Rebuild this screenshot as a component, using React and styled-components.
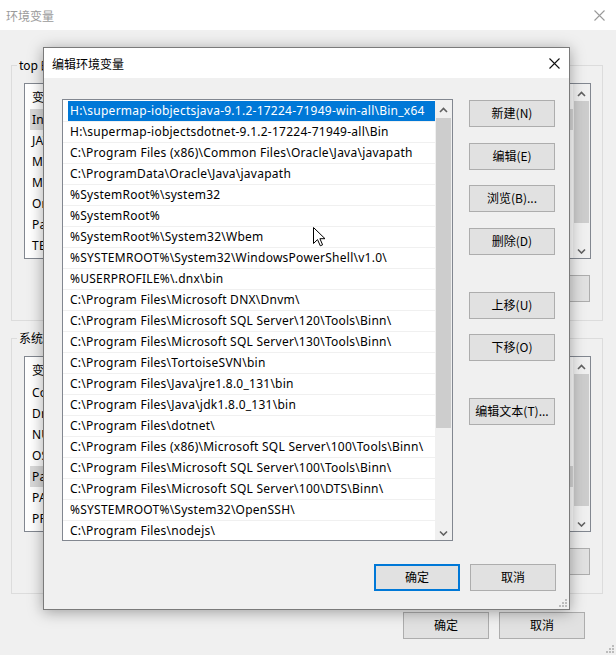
import React from "react";
import styled, { createGlobalStyle } from "styled-components";

const GlobalStyle = createGlobalStyle`
  html, body { margin: 0; padding: 0; background: #f0f0f0; }
  body {
    font-family: "Noto Sans", "Noto Sans CJK SC", sans-serif;
    font-size: 12px;
    color: #000;
  }
  * { box-sizing: border-box; }
`;

const paths = [
  "H:\\supermap-iobjectsjava-9.1.2-17224-71949-win-all\\Bin_x64",
  "H:\\supermap-iobjectsdotnet-9.1.2-17224-71949-all\\Bin",
  "C:\\Program Files (x86)\\Common Files\\Oracle\\Java\\javapath",
  "C:\\ProgramData\\Oracle\\Java\\javapath",
  "%SystemRoot%\\system32",
  "%SystemRoot%",
  "%SystemRoot%\\System32\\Wbem",
  "%SYSTEMROOT%\\System32\\WindowsPowerShell\\v1.0\\",
  "%USERPROFILE%\\.dnx\\bin",
  "C:\\Program Files\\Microsoft DNX\\Dnvm\\",
  "C:\\Program Files\\Microsoft SQL Server\\120\\Tools\\Binn\\",
  "C:\\Program Files\\Microsoft SQL Server\\130\\Tools\\Binn\\",
  "C:\\Program Files\\TortoiseSVN\\bin",
  "C:\\Program Files\\Java\\jre1.8.0_131\\bin",
  "C:\\Program Files\\Java\\jdk1.8.0_131\\bin",
  "C:\\Program Files\\dotnet\\",
  "C:\\Program Files (x86)\\Microsoft SQL Server\\100\\Tools\\Binn\\",
  "C:\\Program Files\\Microsoft SQL Server\\100\\Tools\\Binn\\",
  "C:\\Program Files\\Microsoft SQL Server\\100\\DTS\\Binn\\",
  "%SYSTEMROOT%\\System32\\OpenSSH\\",
  "C:\\Program Files\\nodejs\\",
];

const userVars = ["Include", "JAVA_HOME", "MAVEN_HOME", "MOZ_PLUGIN_PATH", "OneDrive", "Path", "TEMP"];
const sysVars = ["ComSpec", "DriverData", "NUMBER_OF_PROCESSORS", "OS", "Path", "PATHEXT", "PROCESSOR_ARCHITECTURE"];

const sideButtons = [
  { label: "新建(N)", gap: 0 },
  { label: "编辑(E)", gap: 16 },
  { label: "浏览(B)...", gap: 15 },
  { label: "删除(D)", gap: 16 },
  { label: "上移(U)", gap: 37 },
  { label: "下移(O)", gap: 15 },
  { label: "编辑文本(T)...", gap: 37 },
];

function Chevron({ down }) {
  return (
    <svg width="9" height="6" viewBox="0 0 9 6">
      <polyline
        points={down ? "1,1.5 4.5,5 8,1.5" : "1,5 4.5,1.5 8,5"}
        fill="none"
        stroke="#606060"
        strokeWidth="1.6"
      />
    </svg>
  );
}

function CloseIcon({ color }) {
  return (
    <svg width="11" height="11" viewBox="0 0 11 11">
      <path d="M0.5 0.5 L10.5 10.5 M10.5 0.5 L0.5 10.5" stroke={color} strokeWidth="1.1" />
    </svg>
  );
}

function Grip() {
  const dots = [[6, 0], [3, 3], [6, 3], [0, 6], [3, 6], [6, 6]];
  return (
    <svg width="8" height="8" viewBox="0 0 8 8">
      {dots.map(([x, y]) => (
        <rect key={x + "-" + y} x={x} y={y} width="2" height="2" fill="#bcbcbc" />
      ))}
    </svg>
  );
}

function Scroll({ thumbTop, thumbHeight }) {
  return (
    <ScrollBar>
      <ScrollArrow><Chevron /></ScrollArrow>
      <Track>
        <Thumb $top={thumbTop} $height={thumbHeight} />
      </Track>
      <ScrollArrow><Chevron down /></ScrollArrow>
    </ScrollBar>
  );
}

function VarList({ items, selected, thumbHeight }) {
  return (
    <ListBox $height={176}>
      <ListRows>
        <HeaderRow>变量</HeaderRow>
        {items.map((v, i) => (
          <VarRow key={v} $selected={i === selected}>{v}</VarRow>
        ))}
      </ListRows>
      <Scroll thumbTop={0} thumbHeight={thumbHeight} />
    </ListBox>
  );
}

export default function App() {
  return (
    <>
      <GlobalStyle />
      <Window>
        <TitleBar $inactive $padRight={11}>
          <span>环境变量</span>
          <CloseIcon color="#9a9a9a" />
        </TitleBar>
        <WindowBody>
          <Group $top={27}>
            <Legend>top 的用户变量(U)</Legend>
            <VarList items={userVars} selected={0} thumbHeight={122} />
            <ButtonRow>
              <Button>新建(N)...</Button>
              <Button>编辑(E)...</Button>
              <Button>删除(D)</Button>
            </ButtonRow>
          </Group>
          <Group $top={9}>
            <Legend>系统变量(S)</Legend>
            <VarList items={sysVars} selected={4} thumbHeight={132} />
            <ButtonRow>
              <Button>新建(W)...</Button>
              <Button>编辑(I)...</Button>
              <Button>删除(L)</Button>
            </ButtonRow>
          </Group>
          <FooterRow $top={18} $padRight={18}>
            <Button>确定</Button>
            <Button>取消</Button>
          </FooterRow>
        </WindowBody>
        <CornerGrip $right={2} $bottom={2}><Grip /></CornerGrip>

        <Dialog>
          <TitleBar $padRight={9} $padLeft={8}>
            <span>编辑环境变量</span>
            <CloseIcon color="#111" />
          </TitleBar>
          <DialogBody>
            <PathList>
              <PathRows>
                {paths.map((p, i) => (
                  <PathRow key={p}>
                    <PathLabel $selected={i === 0}>{p}</PathLabel>
                  </PathRow>
                ))}
              </PathRows>
              <Scroll thumbTop={1} thumbHeight={310} />
            </PathList>
            <SideColumn>
              {sideButtons.map((b) => (
                <Button key={b.label} $gap={b.gap}>{b.label}</Button>
              ))}
            </SideColumn>
          </DialogBody>
          <FooterRow $top={23} $padRight={13}>
            <Button $default>确定</Button>
            <Button>取消</Button>
          </FooterRow>
          <CornerGrip $right={2} $bottom={2}><Grip /></CornerGrip>
        </Dialog>

        <Cursor>
          <svg width="13" height="20" viewBox="0 0 13 20">
            <path
              d="M0.5 0.5 L0.5 16.5 L4.5 12.6 L7.3 18.8 L9.6 17.8 L6.9 11.7 L12 11.7 Z"
              fill="#fff"
              stroke="#000"
              strokeWidth="1"
              strokeLinejoin="miter"
            />
          </svg>
        </Cursor>
      </Window>
    </>
  );
}

const Window = styled.div`
  position: relative;
  width: 616px;
  height: 655px;
  background: #f0f0f0;
  overflow: hidden;
  display: flex;
  flex-direction: column;
`;

const TitleBar = styled.div`
  height: 30px;
  flex: none;
  background: #fff;
  display: flex;
  align-items: center;
  justify-content: space-between;
  padding: 0 ${(p) => p.$padRight}px 0 ${(p) => p.$padLeft ?? 6}px;
  font-family: "Noto Sans CJK SC", sans-serif;
  font-size: 12px;
  color: ${(p) => (p.$inactive ? "#9a9a9a" : "#000")};
`;

const WindowBody = styled.div`
  display: flex;
  flex-direction: column;
  padding: 0 13px 0 11px;
`;

const Group = styled.fieldset`
  margin: ${(p) => p.$top}px 0 0;
  padding: 0 6px 0 6px;
  border: 1px solid #dcdcdc;
  min-width: 0;
  height: 264px;
  display: flex;
  flex-direction: column;
`;

const Legend = styled.legend`
  padding: 0 2px;
  margin-left: -1px;
  font-family: "Noto Sans CJK SC", sans-serif;
  font-size: 12px;
  line-height: 16px;
`;

const ListBox = styled.div`
  margin: 10px 5px 0 6px;
  height: ${(p) => p.$height}px;
  border: 1px solid #828790;
  background: #fff;
  display: flex;
  overflow: hidden;
`;

const ListRows = styled.div`
  flex: 1;
  min-width: 0;
  display: flex;
  flex-direction: column;
  padding-left: 5px;
`;

const HeaderRow = styled.div`
  height: 25px;
  line-height: 25px;
  padding-left: 2px;
  font-family: "Noto Sans CJK SC", sans-serif;
`;

const VarRow = styled.div`
  height: 21px;
  line-height: 21px;
  padding-left: 2px;
  white-space: nowrap;
  letter-spacing: 0.25px;
  background: ${(p) => (p.$selected ? "#d9d9d9" : "transparent")};
`;

const ScrollBar = styled.div`
  width: 17px;
  flex: none;
  background: #f0f0f0;
  display: flex;
  flex-direction: column;
`;

const ScrollArrow = styled.div`
  height: 17px;
  flex: none;
  display: flex;
  align-items: center;
  justify-content: center;
  padding-top: 2px;
`;

const Track = styled.div`
  flex: 1;
  display: flex;
  flex-direction: column;
  align-items: center;
`;

const Thumb = styled.div`
  margin-top: ${(p) => p.$top}px;
  width: 15px;
  height: ${(p) => p.$height}px;
  background: #cdcdcd;
`;

const ButtonRow = styled.div`
  display: flex;
  justify-content: flex-end;
  gap: 10px;
  margin: 16px 6px 0 0;
`;

const FooterRow = styled.div`
  display: flex;
  justify-content: flex-end;
  gap: 10px;
  margin-top: ${(p) => p.$top}px;
  padding-right: ${(p) => p.$padRight}px;
`;

const Button = styled.div`
  width: 86px;
  height: 27px;
  flex: none;
  margin-top: ${(p) => p.$gap ?? 0}px;
  padding-bottom: 1px;
  display: flex;
  align-items: center;
  justify-content: center;
  background: #e1e1e1;
  border: ${(p) => (p.$default ? "2px solid #0078d7" : "1px solid #adadad")};
  font-family: "Noto Sans CJK SC", sans-serif;
  font-size: 12px;
  line-height: 16px;
  white-space: nowrap;
`;

const CornerGrip = styled.div`
  position: absolute;
  right: ${(p) => p.$right}px;
  bottom: ${(p) => p.$bottom}px;
  line-height: 0;
`;

const Dialog = styled.div`
  position: absolute;
  left: 43px;
  top: 47px;
  width: 527px;
  height: 563px;
  border: 1px solid #7a7a7a;
  background: #f0f0f0;
  box-shadow: 0 2px 14px rgba(0, 0, 0, 0.35);
  display: flex;
  flex-direction: column;
`;

const DialogBody = styled.div`
  display: flex;
  padding: 21px 13px 0 18px;
`;

const PathList = styled.div`
  width: 391px;
  height: 442px;
  border: 1px solid #828790;
  background: #fff;
  display: flex;
  overflow: hidden;
`;

const PathRows = styled.div`
  flex: 1;
  min-width: 0;
  padding-top: 1px;
  display: flex;
  flex-direction: column;
  overflow: hidden;
`;

const PathRow = styled.div`
  height: 21px;
  flex: none;
  padding-left: 5px;
  border-bottom: 1px solid #f0f0f0;
  display: flex;
`;

const PathLabel = styled.div`
  flex: 1;
  padding-left: 2px;
  line-height: 20px;
  white-space: nowrap;
  font-size: 12px;
  letter-spacing: 0.25px;
  background: ${(p) => (p.$selected ? "#0078d7" : "transparent")};
  color: ${(p) => (p.$selected ? "#fff" : "#000")};
`;

const SideColumn = styled.div`
  display: flex;
  flex-direction: column;
  margin: 1px 0 0 16px;
`;

const Cursor = styled.div`
  position: absolute;
  left: 313px;
  top: 227px;
  line-height: 0;
  z-index: 5;
`;
